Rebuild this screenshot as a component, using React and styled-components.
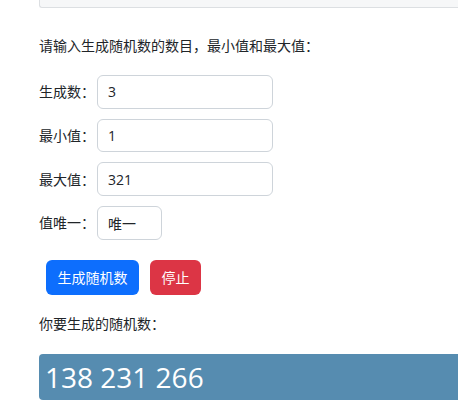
import React, { useState } from "react";
import styled, { createGlobalStyle } from "styled-components";

const GlobalStyle = createGlobalStyle`
  html, body {
    margin: 0;
    padding: 0;
    overflow: hidden;
    background: #fff;
  }
  body {
    font-family: "Segoe UI", "Open Sans", "Noto Sans CJK SC", sans-serif;
    font-size: 14px;
    color: #212529;
  }
`;

const Page = styled.div`
  width: 520px;
  padding-left: 39px;
`;

const TopPanel = styled.div`
  height: 7px;
  background: #f6f7f8;
  border-left: 1px solid #dcdfe2;
  border-bottom: 1px solid #dcdfe2;
  border-bottom-left-radius: 3px;
`;

const Hint = styled.p`
  margin: 27px 0 0;
  line-height: 21px;
`;

const Form = styled.div`
  display: flex;
  flex-direction: column;
  gap: 10px;
  margin-top: 19px;
`;

const Row = styled.div`
  display: flex;
  align-items: center;
`;

const Label = styled.label`
  width: 58px;
  line-height: 21px;
`;

const Field = styled.input`
  box-sizing: border-box;
  width: ${(p) => p.$w}px;
  height: 33.7px;
  padding: 0 10px;
  border: 1px solid #ced4da;
  border-radius: 6px;
  font: inherit;
  color: #212529;
  outline: none;
`;

const Actions = styled.div`
  display: flex;
  gap: 11px;
  margin: 20px 0 0 7px;
`;

const Button = styled.button`
  height: 35px;
  padding: 0 11.5px;
  border: none;
  border-radius: 6px;
  font: inherit;
  color: #fff;
  background: ${(p) => (p.$danger ? "#dc3545" : "#0d6efd")};
  cursor: pointer;
`;

const ResultLabel = styled.p`
  margin: 18px 0 0;
  line-height: 21px;
`;

const Result = styled.div`
  margin-top: 20px;
  height: 46px;
  padding-left: 6px;
  line-height: 46px;
  font-size: 28px;
  color: #fff;
  background: #568cb0;
  border-radius: 4px;
`;

export default function App() {
  const [count, setCount] = useState("3");
  const [min, setMin] = useState("1");
  const [max, setMax] = useState("321");

  return (
    <>
      <GlobalStyle />
      <Page>
        <TopPanel />
        <Hint>请输入生成随机数的数目，最小值和最大值：</Hint>
        <Form>
          <Row>
            <Label>生成数：</Label>
            <Field $w={176} value={count} onChange={(e) => setCount(e.target.value)} />
          </Row>
          <Row>
            <Label>最小值：</Label>
            <Field $w={176} value={min} onChange={(e) => setMin(e.target.value)} />
          </Row>
          <Row>
            <Label>最大值：</Label>
            <Field $w={176} value={max} onChange={(e) => setMax(e.target.value)} />
          </Row>
          <Row>
            <Label>值唯一：</Label>
            <Field $w={65} defaultValue="唯一" />
          </Row>
        </Form>
        <Actions>
          <Button>生成随机数</Button>
          <Button $danger>停止</Button>
        </Actions>
        <ResultLabel>你要生成的随机数：</ResultLabel>
        <Result>138 231 266</Result>
      </Page>
    </>
  );
}
